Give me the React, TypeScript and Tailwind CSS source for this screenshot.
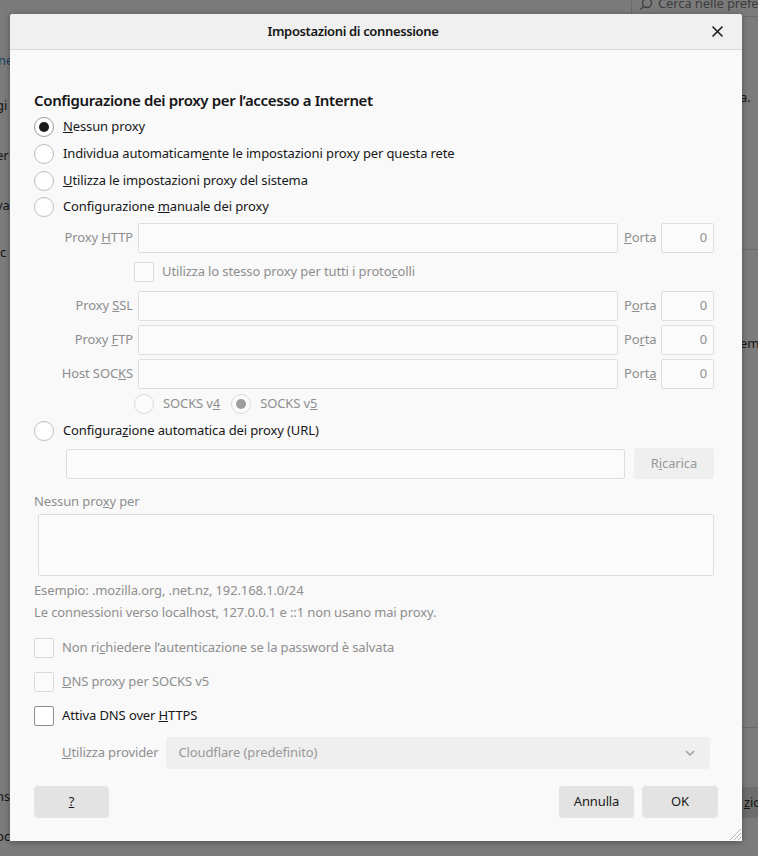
import type { ReactNode } from "react";

const dim = "text-[#8e8e8e]";

function Radio({ checked = false, disabled = false }: { checked?: boolean; disabled?: boolean }) {
  return (
    <span
      className={`flex h-[20px] w-[20px] shrink-0 items-center justify-center rounded-full border ${
        disabled ? "border-[#dadada] bg-[#fbfbfb]" : checked ? "border-[#9b9b9b] bg-white" : "border-[#bdbdbd] bg-white"
      }`}
    >
      {checked ? (
        <span className={`h-[10px] w-[10px] rounded-full ${disabled ? "bg-[#9d9d9d]" : "bg-[#1c1c1c]"}`} />
      ) : null}
    </span>
  );
}

function Checkbox({ disabled = false }: { disabled?: boolean }) {
  return (
    <span
      className={`block h-[20px] w-[20px] shrink-0 rounded-[2px] border ${
        disabled ? "border-[#dadada] bg-[#fbfbfb]" : "border-[#8f8f8f] bg-white"
      }`}
    />
  );
}

function TextBox({ className = "", children }: { className?: string; children?: ReactNode }) {
  return (
    <div className={`rounded-[2px] border border-[#dedede] bg-[#fbfbfb] ${className}`}>{children}</div>
  );
}

function Button({ children, className = "" }: { children: ReactNode; className?: string }) {
  return (
    <button
      type="button"
      className={`flex h-[32px] items-center justify-center rounded-[4px] bg-[#e3e3e3] text-[13px] text-[#1a1a1a] ${className}`}
    >
      {children}
    </button>
  );
}

function ProxyRow({ label, port }: { label: ReactNode; port: ReactNode }) {
  return (
    <div className="flex h-[30px] items-center gap-[5px]">
      <span className={`w-[75px] shrink-0 text-right ${dim}`}>{label}</span>
      <TextBox className="h-[30px] flex-1" />
      <span className={`w-[33px] shrink-0 pl-px ${dim}`}>{port}</span>
      <TextBox className={`flex h-[30px] w-[53px] shrink-0 items-center justify-end pr-[6px] ${dim}`}>0</TextBox>
    </div>
  );
}

function Background() {
  return (
    <div className="pointer-events-none absolute inset-0 text-[13px] text-[#161616]">
      <span className="absolute left-[-2px] top-[51px] text-[#1d3d66]">ne</span>
      <span className="absolute left-[-4px] top-[96px]">gi</span>
      <span className="absolute left-[-4px] top-[146px]">er</span>
      <span className="absolute left-[-4px] top-[196px]">va</span>
      <span className="absolute left-[0px] top-[243px]">c</span>
      <span className="absolute left-[-4px] top-[787px]">ns</span>
      <span className="absolute left-[-4px] top-[827px]">pc</span>
      <div className="absolute left-[631px] top-[-10px] flex h-[27px] w-[160px] items-center whitespace-nowrap border-b border-l border-[#6a6a6a] pl-[7px] pt-[2px] text-[#3c3c3c]">
        <svg width="14" height="14" viewBox="0 0 14 14" className="mr-[5px] shrink-0">
          <circle cx="8" cy="6" r="4.5" fill="none" stroke="#3c3c3c" strokeWidth="1.3" />
          <path d="M4.8 9.2 1.5 12.5" stroke="#3c3c3c" strokeWidth="1.3" />
        </svg>
        <span>Cerca nelle preferenze</span>
      </div>
      <span className="absolute left-[740px] top-[88px]">a.</span>
      <div className="absolute left-[742px] top-[249px] h-px w-[16px] bg-[#6a6a6a]" />
      <span className="absolute left-[740px] top-[334px]">em</span>
      <div className="absolute left-[742px] top-[727px] h-px w-[16px] bg-[#6a6a6a]" />
      <div className="absolute left-[742px] top-[787px] flex h-[31px] w-[30px] items-center bg-[#6d6d6d] pl-[2px]">
        <u>z</u>io
      </div>
    </div>
  );
}

export default function App() {
  return (
    <div className="relative h-[856px] w-[758px] overflow-hidden bg-[#7b7b7b] pl-[10px] pt-[14px] font-['Noto_Sans',sans-serif] text-[13px] tracking-[-0.12px] text-[#181818]">
      <Background />
      <div className="relative flex h-[827px] w-[732px] flex-col overflow-hidden rounded-t-[3px] bg-[#f9f9f9] shadow-[0_1px_6px_rgba(0,0,0,0.35)]">
        <div className="relative flex h-[36px] shrink-0 items-center justify-center border-b border-[#d9d9d9] bg-[#f0f0f0] pr-[46px]">
          <span className="font-semibold tracking-[-0.35px] text-[#151515]">Impostazioni di connessione</span>
          <svg
            width="11"
            height="11"
            viewBox="0 0 11 11"
            className="absolute right-[19px] top-[12px]"
          >
            <path d="M1 1 10 10M10 1 1 10" stroke="#1a1a1a" strokeWidth="1.6" strokeLinecap="round" />
          </svg>
        </div>

        <div className="flex flex-1 flex-col pl-[24px] pr-[28px] pt-[40px]">
          <h2 className="text-[15px] font-semibold leading-[20px] tracking-[-0.35px] text-[#151515]">
            Configurazione dei proxy per l’accesso a Internet
          </h2>

          <div className="mt-[3px] flex flex-col">
            <label className="flex h-[27px] items-center gap-[9px]">
              <Radio checked />
              <span>
                <u>N</u>essun proxy
              </span>
            </label>
            <label className="flex h-[27px] items-center gap-[9px]">
              <Radio />
              <span>
                Individua automaticam<u>e</u>nte le impostazioni proxy per questa rete
              </span>
            </label>
            <label className="flex h-[27px] items-center gap-[9px]">
              <Radio />
              <span>
                <u>U</u>tilizza le impostazioni proxy del sistema
              </span>
            </label>
            <label className="flex h-[26px] items-center gap-[9px]">
              <Radio />
              <span>
                Configurazione <u>m</u>anuale dei proxy
              </span>
            </label>
          </div>

          <div className="ml-[24px] mt-[3px] flex flex-col">
            <ProxyRow
              label={
                <>
                  Proxy <u>H</u>TTP
                </>
              }
              port={
                <>
                  <u>P</u>orta
                </>
              }
            />
            <div className="flex h-[38px] items-center gap-[8px] pl-[76px]">
              <Checkbox disabled />
              <span className={dim}>
                Utilizza lo stesso proxy per tutti i proto<u>c</u>olli
              </span>
            </div>
            <div className="flex flex-col gap-[4px]">
              <ProxyRow
                label={
                  <>
                    Proxy <u>S</u>SL
                  </>
                }
                port={
                  <>
                    P<u>o</u>rta
                  </>
                }
              />
              <ProxyRow
                label={
                  <>
                    Proxy <u>F</u>TP
                  </>
                }
                port={
                  <>
                    Po<u>r</u>ta
                  </>
                }
              />
              <ProxyRow
                label={
                  <>
                    Host SOC<u>K</u>S
                  </>
                }
                port={
                  <>
                    Port<u>a</u>
                  </>
                }
              />
            </div>
            <div className="flex h-[29px] items-center pl-[76px]">
              <Radio disabled />
              <span className={`ml-[9px] ${dim}`}>
                SOCKS v<u>4</u>
              </span>
              <span className="ml-[11px]">
                <Radio checked disabled />
              </span>
              <span className={`ml-[9px] ${dim}`}>
                SOCKS v<u>5</u>
              </span>
            </div>
          </div>

          <label className="flex h-[26px] items-center gap-[9px]">
            <Radio />
            <span>
              Configura<u>z</u>ione automatica dei proxy (URL)
            </span>
          </label>

          <div className="ml-[32px] mt-[4px] flex items-center gap-[9px]">
            <TextBox className="h-[30px] flex-1" />
            <div className="flex h-[31px] w-[80px] items-center justify-center rounded-[4px] bg-[#efefef] text-[#999999]">
              R<u>i</u>carica
            </div>
          </div>

          <div className={`mt-[13px] leading-[18px] ${dim}`}>
            Nessun pro<u>x</u>y per
          </div>
          <TextBox className="ml-[4px] mt-[4px] h-[62px]" />

          <div className={`mt-[3px] leading-[22px] ${dim}`}>Esempio: .mozilla.org, .net.nz, 192.168.1.0/24</div>
          <div className={`leading-[22px] ${dim}`}>
            Le connessioni verso localhost, 127.0.0.1 e ::1 non usano mai proxy.
          </div>

          <div className="mt-[8px] flex flex-col">
            <label className="flex h-[34px] items-center gap-[8px]">
              <Checkbox disabled />
              <span className={dim}>
                Non ri<u>c</u>hiedere l’autenticazione se la password è salvata
              </span>
            </label>
            <label className="flex h-[34px] items-center gap-[8px]">
              <Checkbox disabled />
              <span className={dim}>
                <u>D</u>NS proxy per SOCKS v5
              </span>
            </label>
            <label className="flex h-[34px] items-center gap-[8px]">
              <Checkbox />
              <span>
                Attiva DNS over <u>H</u>TTPS
              </span>
            </label>
          </div>

          <div className="ml-[28px] mr-[4px] mt-[4px] flex items-center gap-[8px]">
            <span className={`whitespace-nowrap ${dim}`}>
              <u>U</u>tilizza provider
            </span>
            <div className="flex h-[32px] flex-1 items-center justify-between rounded-[4px] bg-[#efefef] pl-[12px] pr-[15px] text-[#999999]">
              <span>Cloudflare (predefinito)</span>
              <svg width="10" height="6" viewBox="0 0 10 6">
                <path d="M1 1 5 5 9 1" fill="none" stroke="#a0a0a0" strokeWidth="1.5" />
              </svg>
            </div>
          </div>

          <div className="-mr-[4px] mt-[17px] flex items-center">
            <Button className="w-[75px]">
              <u>?</u>
            </Button>
            <div className="ml-auto flex gap-[8px]">
              <Button className="w-[75px]">Annulla</Button>
              <Button className="w-[76px]">OK</Button>
            </div>
          </div>
        </div>

        <svg width="14" height="14" viewBox="0 0 14 14" className="absolute bottom-0 right-0">
          <path d="M13 2 2 13M13 6 6 13M13 10 10 13" stroke="#b4b4b4" strokeWidth="1" />
        </svg>
      </div>
    </div>
  );
}
